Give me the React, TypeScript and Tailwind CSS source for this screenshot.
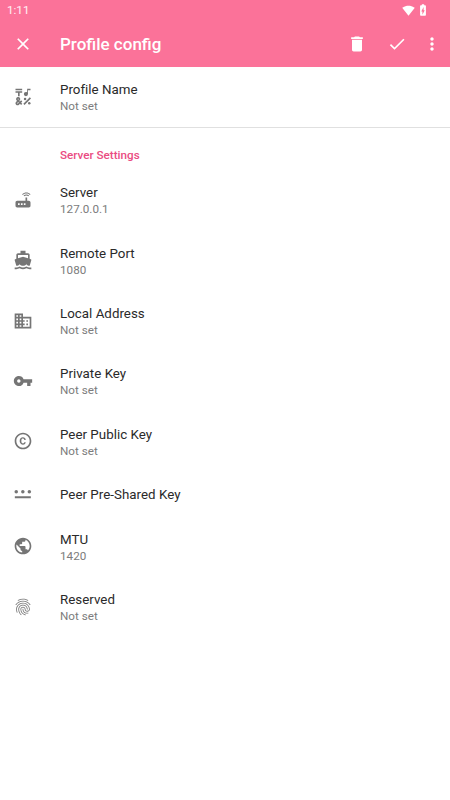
import type { ComponentType } from 'react'
import {
  MdBatteryChargingFull,
  MdCheck,
  MdClose,
  MdCopyright,
  MdDelete,
  MdDirectionsBoat,
  MdDomain,
  MdEmojiSymbols,
  MdFingerprint,
  MdMoreVert,
  MdPublic,
  MdRouter,
  MdSignalWifi4Bar,
  MdVpnKey,
} from 'react-icons/md'

interface IconProps {
  size?: number
  className?: string
}

interface Preference {
  title: string
  summary?: string
  icon: ComponentType<IconProps>
}

// three dots over an underline
function SharedKeyIcon({ size = 24, className }: IconProps) {
  return (
    <svg viewBox="0 0 24 24" width={size} height={size} fill="currentColor" className={className}>
      <circle cx="3.9" cy="9.4" r="2.1" />
      <circle cx="11.8" cy="9.4" r="2.1" />
      <circle cx="19.6" cy="9.4" r="2.1" />
      <path d="M2.2 14.8h19.2v2.2h-19.2z" />
    </svg>
  )
}

const SERVER_SETTINGS: Preference[] = [
  { title: 'Server', summary: '127.0.0.1', icon: MdRouter },
  { title: 'Remote Port', summary: '1080', icon: MdDirectionsBoat },
  { title: 'Local Address', summary: 'Not set', icon: MdDomain },
  { title: 'Private Key', summary: 'Not set', icon: MdVpnKey },
  { title: 'Peer Public Key', summary: 'Not set', icon: MdCopyright },
  { title: 'Peer Pre-Shared Key', icon: SharedKeyIcon },
  { title: 'MTU', summary: '1420', icon: MdPublic },
  { title: 'Reserved', summary: 'Not set', icon: MdFingerprint },
]

function PreferenceRow({ item }: { item: Preference }) {
  const Icon = item.icon

  return (
    <button className={`flex w-full items-center pl-[13.4px] text-left ${item.summary ? 'h-[60.4px]' : 'h-[44.6px]'}`}>
      <Icon size={20} className="mr-[26.6px] mb-[0.8px] shrink-0 text-[#757575]" />
      <span className={`flex flex-col ${item.summary ? 'pt-[1.2px]' : ''}`}>
        <span className="text-[13.33px] leading-[17px] tracking-[0.02px] text-[#2a2a2a]">{item.title}</span>
        {item.summary && (
          <span className="text-[11.67px] leading-4 tracking-[0.02px] text-[#7c7c7c]">{item.summary}</span>
        )}
      </span>
    </button>
  )
}

export default function App() {
  return (
    <div className="min-h-screen bg-white font-[Roboto,sans-serif]">
      <header className="h-[67px] bg-[#fb7299] text-white">
        <div className="flex h-5 items-center justify-between pr-[20px] pl-[7px]">
          <span className="text-[11.67px] leading-5 text-white/90">1:11</span>
          <div className="flex items-center gap-[1px]">
            <MdSignalWifi4Bar size={13} />
            <MdBatteryChargingFull size={14} />
          </div>
        </div>
        <div className="flex h-[47px] items-center pl-[13.3px]">
          <button aria-label="Close">
            <MdClose size={20} />
          </button>
          <h1 className="ml-[26.7px] flex-1 pt-0.5 text-[17px] font-medium">Profile config</h1>
          <button aria-label="Delete" className="mr-5">
            <MdDelete size={20} />
          </button>
          <button aria-label="Apply" className="mr-[15px]">
            <MdCheck size={20} />
          </button>
          <button aria-label="More options" className="mr-[8px]">
            <MdMoreVert size={20} />
          </button>
        </div>
      </header>

      <main>
        <PreferenceRow item={{ title: 'Profile Name', summary: 'Not set', icon: MdEmojiSymbols }} />
        <section className="border-t border-[#e0e0e0]">
          <h2 className="flex h-[41.6px] items-end pb-[6.6px] pl-[60px] text-[11.67px] leading-4 font-medium text-[#ea4c82]">
            Server Settings
          </h2>
          {SERVER_SETTINGS.map((item) => (
            <PreferenceRow key={item.title} item={item} />
          ))}
        </section>
      </main>
    </div>
  )
}
